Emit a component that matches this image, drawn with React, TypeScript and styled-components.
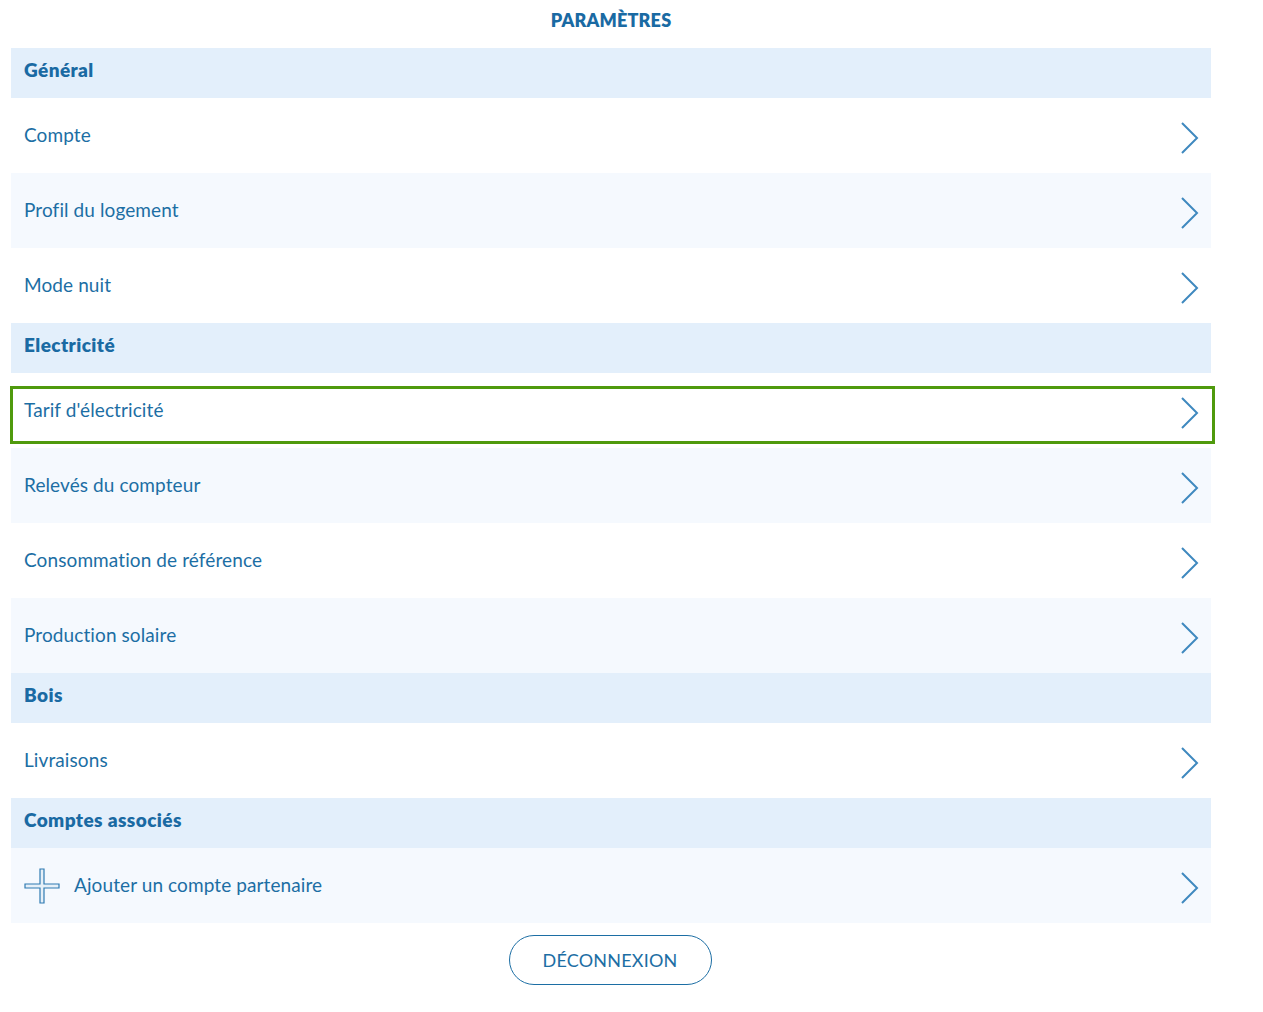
import React from "react";
import styled, { createGlobalStyle } from "styled-components";

const GlobalStyle = createGlobalStyle`
  body {
    margin: 0;
    background: #ffffff;
    font-family: "Lato", "Noto Sans", sans-serif;
  }
`;

const Page = styled.div`
  width: 1200px;
  padding: 0 0 0 11px;
`;

const Title = styled.h1`
  margin: 0;
  height: 48px;
  display: flex;
  align-items: center;
  justify-content: center;
  padding-bottom: 8px;
  box-sizing: border-box;
  font-size: 18px;
  font-weight: 800;
  color: #1a6aa3;
  letter-spacing: 0.2px;
`;

const List = styled.div`
  display: flex;
  flex-direction: column;
`;

const Section = styled.div`
  height: 50px;
  background: #e3effb;
  display: flex;
  align-items: center;
  padding: 0 13px;
  padding-bottom: 8px;
  box-sizing: border-box;
  font-size: 19px;
  font-weight: 800;
  letter-spacing: 0.4px;
  color: #1a6aa3;
`;

const Row = styled.div<{ $shade?: boolean; $focused?: boolean }>`
  position: relative;
  height: 75px;
  background: ${(p) => (p.$shade ? "#f5f9fe" : "#ffffff")};
  display: flex;
  align-items: center;
  gap: 14px;
  padding: 0 11px 0 13px;
  box-sizing: border-box;
  font-size: 19px;
  letter-spacing: 0.1px;
  color: #1c6ea4;

  ${(p) =>
    p.$focused &&
    `
    &::after {
      content: "";
      position: absolute;
      left: -1px;
      right: -4px;
      top: 13px;
      bottom: 4px;
      border: 3px solid #4f9a0d;
      pointer-events: none;
    }
  `}
`;

const Label = styled.span`
  flex: 1;
  padding-bottom: 2px;
`;

const Chevron = styled.svg`
  width: 20px;
  height: 34px;
  flex-shrink: 0;
  margin-top: 4px;
`;

const PlusIcon = styled.svg`
  width: 36px;
  height: 36px;
  flex-shrink: 0;
`;

const Footer = styled.div`
  display: flex;
  justify-content: center;
  padding: 12px 2px 0 0;
`;

const LogoutButton = styled.button`
  width: 203px;
  height: 50px;
  border: 1px solid #1c6ea4;
  border-radius: 25px;
  background: #ffffff;
  color: #1c6ea4;
  font-family: "Lato", "Noto Sans", sans-serif;
  font-size: 18px;
  letter-spacing: 0.2px;
  cursor: pointer;
`;

const ChevronIcon = () => (
  <Chevron viewBox="0 0 20 34">
    <path d="M2 2 L17 17 L2 32" fill="none" stroke="#3f89bf" strokeWidth="2" />
  </Chevron>
);

const Plus = () => (
  <PlusIcon viewBox="0 0 36 36">
    <path
      d="M16 1 H20 V16 H35 V20 H20 V35 H16 V20 H1 V16 H16 Z"
      fill="#e6f0f8"
      stroke="#2f7bb2"
      strokeWidth="1.2"
    />
  </PlusIcon>
);

type Item =
  | { kind: "section"; label: string }
  | { kind: "row"; label: string; shade?: boolean; focused?: boolean; plus?: boolean };

const items: Item[] = [
  { kind: "section", label: "Général" },
  { kind: "row", label: "Compte" },
  { kind: "row", label: "Profil du logement", shade: true },
  { kind: "row", label: "Mode nuit" },
  { kind: "section", label: "Electricité" },
  { kind: "row", label: "Tarif d'électricité", focused: true },
  { kind: "row", label: "Relevés du compteur", shade: true },
  { kind: "row", label: "Consommation de référence" },
  { kind: "row", label: "Production solaire", shade: true },
  { kind: "section", label: "Bois" },
  { kind: "row", label: "Livraisons" },
  { kind: "section", label: "Comptes associés" },
  { kind: "row", label: "Ajouter un compte partenaire", shade: true, plus: true },
];

export default function App() {
  return (
    <>
      <GlobalStyle />
      <Page>
        <Title>PARAMÈTRES</Title>
        <List>
          {items.map((item, i) =>
            item.kind === "section" ? (
              <Section key={i}>{item.label}</Section>
            ) : (
              <Row key={i} $shade={item.shade} $focused={item.focused}>
                {item.plus && <Plus />}
                <Label>{item.label}</Label>
                <ChevronIcon />
              </Row>
            )
          )}
        </List>
        <Footer>
          <LogoutButton>DÉCONNEXION</LogoutButton>
        </Footer>
      </Page>
    </>
  );
}
